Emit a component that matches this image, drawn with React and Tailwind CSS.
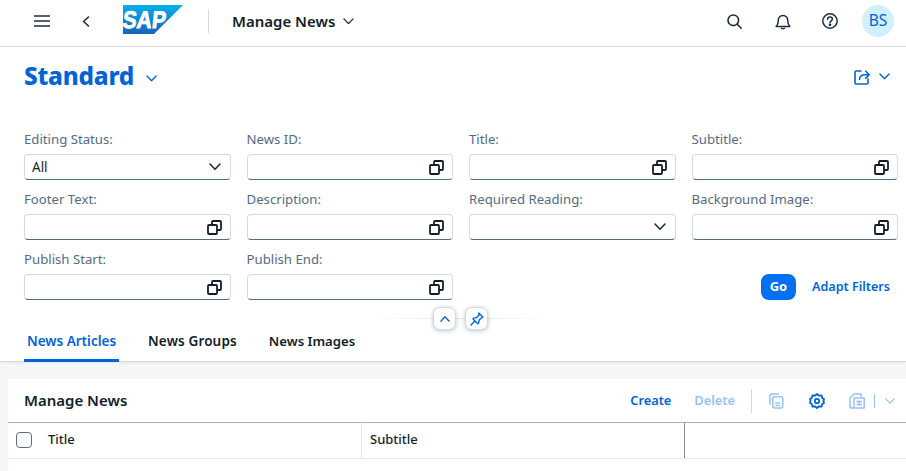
import React from "react";

const F = { fontFamily: '"Noto Sans", "Open Sans", sans-serif' };

function ValueHelp() {
  return (
    <svg width="15" height="15" viewBox="0 0 15 15" fill="none" stroke="#131e29" strokeWidth="1.8">
      <rect x="1" y="5" width="9" height="9" rx="1" />
      <path d="M5 4.800V2a1 1 0 0 1 1-1h7a1 1 0 0 1 1 1v7a1 1 0 0 1-1 1h-2.800" />
    </svg>
  );
}

function Chevron({ color = "#1d2d3e", w = 12, sw = 1.6, up = false }) {
  return (
    <svg width={w} height={w * 0.6} viewBox="0 0 12 7.2" fill="none" stroke={color} strokeWidth={sw} strokeLinecap="round" strokeLinejoin="round">
      <path d={up ? "M1 6.2 6 1l5 5.2" : "M1 1l5 5.2L11 1"} />
    </svg>
  );
}

function Field({ label, value, icon = "help" }) {
  return (
    <div className="flex flex-col">
      <div className="h-[34px] flex items-end pb-[5px] text-[13.2px] leading-[20px] text-[#556b82]">{label}</div>
      <div className="h-[26px] bg-white rounded-[4px] border border-[#d5dadd] border-b-[#556b81] flex items-center justify-between pl-[7px] pr-[8px] text-[13.5px] text-[#131e29]">
        <span>{value}</span>
        {icon === "help" ? <ValueHelp /> : <span className="mr-[1px]"><Chevron /></span>}
      </div>
    </div>
  );
}

function SapLogo() {
  return (
    <svg width="60" height="29" viewBox="0 0 60 29" className="block">
      <defs>
        <linearGradient id="sapg" x1="0" y1="0" x2="0" y2="1">
          <stop offset="0" stopColor="#00b1eb" />
          <stop offset="1" stopColor="#1a62b8" />
        </linearGradient>
      </defs>
      <path d="M0 0h60L31 29H0z" fill="url(#sapg)" />
      <text x="-1" y="23" transform="skewX(-6) translate(2.500 0)" fill="#fff" fontFamily="Liberation Sans" fontWeight="700" fontSize="24" textLength="43" lengthAdjust="spacingAndGlyphs" stroke="#fff" strokeWidth="0.900">SAP</text>
    </svg>
  );
}

export default function App() {
  return (
    <div style={F} className="w-[906px] h-[471px] overflow-hidden bg-[#f5f6f7] flex flex-col text-[#131e29]">
      {/* Shell header */}
      <header className="h-[47px] shrink-0 bg-white border-b border-[#d9d9d9] flex items-center pl-[34px] pr-[12px] pb-[4px]">
        <svg width="16" height="12" viewBox="0 0 16 12" stroke="#1d2d3e" strokeWidth="1.5" className="shrink-0">
          <path d="M0 1h16M0 6h16M0 11h16" />
        </svg>
        <svg width="8" height="11" viewBox="0 0 8 11" fill="none" stroke="#1d2d3e" strokeWidth="1.6" strokeLinecap="round" strokeLinejoin="round" className="ml-[32px]">
          <path d="M6.5 1 1.5 5.5l5 4.500" />
        </svg>
        <div className="ml-[33px] -mt-[3px]">
          <SapLogo />
        </div>
        <div className="ml-[25px] w-px h-[24px] bg-[#d9d9d9]" />
        <span className="ml-[23px] text-[15px] font-semibold">Manage News</span>
        <span className="ml-[8px]"><Chevron w={11} sw={1.4} /></span>
        <div className="ml-auto flex items-center">
          <svg width="15" height="15" viewBox="0 0 15 15" fill="none" stroke="#1d2d3e" strokeWidth="1.6">
            <circle cx="6.300" cy="6.300" r="5.300" />
            <path d="m10.200 10.200 4 4" strokeLinecap="round" />
          </svg>
          <svg width="16" height="17" viewBox="0 0 16 17" fill="none" stroke="#1d2d3e" strokeWidth="1.5" className="ml-[33px]">
            <path d="M1.200 13.400h13.600c-1.600-1.400-2-2.600-2-5.400 0-3-1.800-5.600-4.800-5.600S3.200 5 3.200 8c0 2.800-.4 4-2 5.400z" strokeLinejoin="round" />
            <path d="M6.200 14.600c.4 1.500 3.200 1.500 3.600 0" />
          </svg>
          <svg width="16" height="16" viewBox="0 0 16 16" fill="none" stroke="#1d2d3e" strokeWidth="1.5" className="ml-[31px]">
            <circle cx="8" cy="8" r="7.200" />
            <path d="M5.600 6.200C5.600 4.800 6.700 4 8 4s2.400.8 2.400 2.100c0 1.800-2.400 1.900-2.400 3.700" strokeLinecap="round" />
            <circle cx="8" cy="11.800" r=".6" fill="#1d2d3e" />
          </svg>
          <div className="ml-[24px] w-[32px] h-[32px] rounded-full bg-[#d1efff] flex items-center justify-center text-[15.500px] text-[#0064d9]">BS</div>
        </div>
      </header>

      {/* Filter area */}
      <section className="h-[278px] shrink-0 bg-white pl-[24px] pr-[8px] flex flex-col relative z-10">
        <div className="h-[59px] flex items-center justify-between pr-[8px]">
          <div className="flex items-center">
            <span className="text-[24.300px] font-extrabold text-[#0064d9] leading-none tracking-[-0.2px]">Standard</span>
            <span className="ml-[12px] mt-[4px]"><Chevron color="#0064d9" w={11} sw={1.5} /></span>
          </div>
          <div className="flex items-center">
            <svg width="16" height="16" viewBox="0 0 16 16" fill="none" stroke="#0064d9" strokeWidth="1.6" strokeLinecap="round" strokeLinejoin="round">
              <path d="M7 2H2.200a1.200 1.200 0 0 0-1.200 1.200v10.600A1.200 1.200 0 0 0 2.200 15h10.600a1.200 1.200 0 0 0 1.200-1.200V10" />
              <path d="M5.500 10.500c0-3 2-4.800 5.500-4.800H15M11.800 2.200 15.200 5.700l-3.400 3.400" />
            </svg>
            <span className="ml-[9px]"><Chevron color="#0064d9" w={11} sw={1.5} /></span>
          </div>
        </div>
        <div className="grid grid-cols-4 gap-x-[16px] mt-[14px]">
          <Field label="Editing Status:" value="All" icon="select" />
          <Field label="News ID:" />
          <Field label="Title:" />
          <Field label="Subtitle:" />
          <Field label="Footer Text:" />
          <Field label="Description:" />
          <Field label="Required Reading:" icon="select" />
          <Field label="Background Image:" />
          <Field label="Publish Start:" />
          <Field label="Publish End:" />
          <div className="col-span-2 flex items-end justify-end pr-[8px]">
            <div className="w-[35px] h-[26px] rounded-[8px] bg-[#0070f2] text-white text-[13px] font-bold flex items-center justify-center">Go</div>
            <span className="ml-[16px] h-[26px] flex items-center text-[12.600px] font-semibold text-[#0064d9]">Adapt Filters</span>
          </div>
        </div>
        {/* Collapse control */}
        <div className="absolute left-[370px] top-[260px] w-[180px] flex items-center justify-center">
          <div className="absolute inset-x-0 top-[11px] h-px bg-gradient-to-r from-transparent via-[#e5e5e5] to-transparent" />
          <div className="relative flex gap-[9px] ml-[1px]">
            <div className="w-[23px] h-[23px] bg-white border border-[#d5dadd] rounded-[7px] shadow-[0_1px_4px_rgba(85,107,130,0.4)] flex items-center justify-center">
              <Chevron up color="#0064d9" w={10} sw={1.6} />
            </div>
            <div className="w-[23px] h-[23px] bg-white border border-[#d5dadd] rounded-[7px] shadow-[0_1px_4px_rgba(85,107,130,0.4)] flex items-center justify-center">
              <svg width="14" height="14" viewBox="0 0 14 14" fill="none" stroke="#0064d9" strokeWidth="1.400" strokeLinejoin="round" strokeLinecap="round">
                <path d="M8.800 1 13 5.200l-1.400.5-2.600 2.500-.2 2.600-1 .9L3 6.900l.9-1 2.600-.2 2.500-2.600zM5 9l-4 4" />
              </svg>
            </div>
          </div>
        </div>
      </section>

      {/* Tabs */}
      <nav className="h-[37px] shrink-0 bg-white border-b border-[#d9d9d9] shadow-[0_1px_2px_rgba(0,0,0,0.06)] flex items-stretch pl-[24px] text-[13.500px] font-semibold relative">
        <div className="w-[95px] flex items-center justify-center text-[#0064d9] border-b-[3px] border-[#0064d9] -mb-px pb-[1px]">News Articles</div>
        <div className="ml-[29px] flex items-center pb-[3px] tracking-[0.15px]">News Groups</div>
        <div className="ml-[32px] flex items-center pb-[3px] text-[13.200px]">News Images</div>
      </nav>

      {/* Table panel */}
      <main className="ml-[8px] mt-[17px] flex-1 bg-white flex flex-col">
        <div className="h-[44px] shrink-0 border-b-[1px] border-[#a8b2bd] flex items-center pl-[16px] pr-[11px]">
          <span className="text-[15px] font-semibold">Manage News</span>
          <div className="ml-auto flex items-center">
            <span className="text-[12.800px] font-semibold text-[#0064d9]">Create</span>
            <span className="ml-[23px] text-[12.800px] font-semibold text-[#99c1f4]">Delete</span>
            <div className="ml-[16px] w-px h-[24px] bg-[#d9d9d9]" />
            <svg width="15" height="16" viewBox="0 0 15 16" fill="none" stroke="#99c1f4" strokeWidth="1.500" strokeLinejoin="round" className="ml-[17px]">
              <path d="M1 11.500V2.500A1.500 1.500 0 0 1 2.500 1H10" />
              <rect x="3.800" y="3.800" width="10" height="11.200" rx="1.500" />
              <path d="M6.500 10h4.500M6.500 12.500h4.500" />
            </svg>
            <svg width="16" height="16" viewBox="0 0 16 16" fill="none" stroke="#0064d9" strokeWidth="1.800" strokeLinejoin="round" className="ml-[25px]">
              <path d="M8 1l2 1.700 2.500-.4.700 2.600 1.800 1.100-.5 2 .5 2-1.800 1.100-.7 2.600-2.500-.4L8 15l-2-1.700-2.500.4-.7-2.600L1 10l.5-2L1 6l1.800-1.100.7-2.600 2.500.4z" />
              <circle cx="8" cy="8" r="2.200" />
            </svg>
            <svg width="16" height="16" viewBox="0 0 16 16" fill="none" stroke="#99c1f4" strokeWidth="1.500" strokeLinejoin="round" className="ml-[24px]">
              <path d="M1 15V5l4-4h7v3" />
              <path d="M1 15h14.200V5H5v10" />
              <path d="M7.500 8.500h5.500M7.500 11.500h5.500M10.200 7.500v5" />
            </svg>
            <div className="ml-[9px] w-px h-[14px] bg-[#99c1f4]" />
            <span className="ml-[10px]"><Chevron color="#99c1f4" w={10} sw={1.500} /></span>
          </div>
        </div>
        <div className="h-[36px] shrink-0 flex border-b border-[#e5e5e5] text-[13px] font-medium pb-[2px]">
          <div className="w-[40px] flex items-center pl-[8px]">
            <div className="w-[16px] h-[16px] rounded-[4px] border border-[#556b81] bg-white" />
          </div>
          <div className="w-[314px] flex items-center border-r border-[#e5e5e5] -mb-[2px] pb-[2px]">Title</div>
          <div className="w-[323px] flex items-center pl-[8px] border-r border-[#8c8c8c] -mb-[2px] pb-[2px]">Subtitle</div>
        </div>
      </main>
    </div>
  );
}
